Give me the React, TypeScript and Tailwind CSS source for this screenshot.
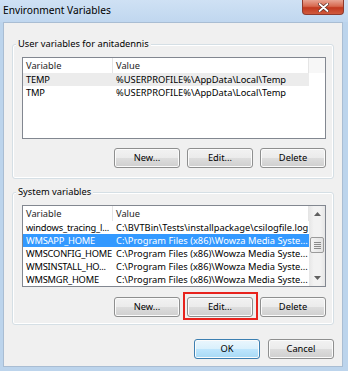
import { ReactNode } from "react"

const font = { fontFamily: '"Noto Sans", "Open Sans", sans-serif' }

const userVars = [
  { name: "TEMP", value: "%USERPROFILE%\\AppData\\Local\\Temp", hover: true },
  { name: "TMP", value: "%USERPROFILE%\\AppData\\Local\\Temp" },
]

const systemVars = [
  { name: "windows_tracing_l...", value: "C:\\BVTBin\\Tests\\installpackage\\csilogfile.log" },
  { name: "WMSAPP_HOME", value: "C:\\Program Files (x86)\\Wowza Media Syste...", selected: true },
  { name: "WMSCONFIG_HOME", value: "C:\\Program Files (x86)\\Wowza Media Syste..." },
  { name: "WMSINSTALL_HO...", value: "C:\\Program Files (x86)\\Wowza Media Syste..." },
  { name: "WMSMGR_HOME", value: "C:\\Program Files (x86)\\Wowza Media Syste..." },
]

function Btn({ children, primary = false }: { children: ReactNode; primary?: boolean }) {
  return (
    <button
      className={
        "h-[20px] w-[66px] rounded-[3px] border text-[9.3px] leading-none text-black flex items-center justify-center shadow-[inset_0_0_0_1px_#fbfbfb] " +
        (primary
          ? "border-[#3c7fb1] bg-[linear-gradient(#eaf6fd,#d9f0fc_50%,#bee6fd_50%,#a7d9f5)]"
          : "border-[#8e8f8f] bg-[linear-gradient(#f2f2f2,#ebebeb_50%,#dddddd_50%,#cfcfcf)]")
      }
    >
      {children}
    </button>
  )
}

function Header() {
  return (
    <div className="flex h-[15px] text-[9.3px] leading-[15px] text-[#1e1e1e]">
      <div className="w-[90px] pl-[3px] border-r border-[#e5e5e5]">Variable</div>
      <div className="w-[196px] pl-[3px] border-r border-[#e5e5e5]">Value</div>
      <div className="flex-1 bg-[#f7f7f7]" />
    </div>
  )
}

function Row({ name, value, selected, hover }: { name: string; value: string; selected?: boolean; hover?: boolean }) {
  return (
    <div
      className={
        "flex h-[13px] w-[286px] text-[9.3px] leading-[13px] whitespace-nowrap " +
        (selected ? "bg-[#3399ff] text-white" : hover ? "bg-[#ececec] text-black" : "text-black")
      }
    >
      <div className="w-[90px] pl-[3px] overflow-hidden tracking-[-0.2px]">{name}</div>
      <div className="w-[196px] pl-[3px] overflow-hidden">{value}</div>
    </div>
  )
}

function ScrollBar() {
  return (
    <div className="w-[16px] h-full bg-[linear-gradient(90deg,#e6e6e6,#f2f2f2_30%,#f2f2f2_70%,#e6e6e6)] flex flex-col items-center">
      <div className="h-[16px] flex items-center justify-center">
        <svg width="7" height="4" viewBox="0 0 7 4"><path d="M0 4 L3.5 0 L7 4 Z" fill="#606060" /></svg>
      </div>
      <div className="flex-1 w-full flex flex-col justify-end pb-[1px]">
        <div className="mx-[1px] h-[16px] rounded-[2px] border border-[#9b9b9b] bg-[linear-gradient(90deg,#f3f3f3,#e2e2e2)] flex flex-col items-center justify-center gap-[1px]">
          <div className="w-[7px] h-[1px] bg-[#8a8a8a]" />
          <div className="w-[7px] h-[1px] bg-[#8a8a8a]" />
          <div className="w-[7px] h-[1px] bg-[#8a8a8a]" />
          <div className="w-[7px] h-[1px] bg-[#8a8a8a]" />
        </div>
        <div className="h-[16px]" />
      </div>
      <div className="h-[16px] flex items-center justify-center">
        <svg width="7" height="4" viewBox="0 0 7 4"><path d="M0 0 L3.5 4 L7 0 Z" fill="#606060" /></svg>
      </div>
    </div>
  )
}

function Group({ label, children, className }: { label: string; children: ReactNode; className?: string }) {
  return (
    <div className={"relative w-[322px] rounded-[3px] border border-[#d5dfe5] shadow-[inset_0_0_0_1px_#ffffff] " + (className ?? "")}>
      <div className="absolute -top-[8px] left-[3px] px-[2px] bg-[#f0f0f0] text-[9.3px] leading-[14px] text-black">{label}</div>
      {children}
    </div>
  )
}

export default function App() {
  return (
    <div style={font} className="w-[348px] h-[371px] flex flex-col bg-[#bcd4ec] overflow-hidden">
      {/* title bar */}
      <div className="h-[22px] flex justify-between bg-[linear-gradient(#cfe1f4,#c0d7ef)]">
        <div className="pl-[3px] pt-[3px] text-[10.2px] leading-[14px] text-black">Environment Variables</div>
        <div className="mr-[4px] w-[42px] h-[15px] rounded-b-[4px] border border-t-0 border-[#8f3a2d] bg-[linear-gradient(#e8a493,#d7694f_45%,#c2391f_55%,#d05a3d)] flex items-center justify-center">
          <svg width="11" height="9" viewBox="0 0 11 9">
            <path d="M1.5 1 L9.5 8 M9.5 1 L1.5 8" stroke="#5a2a22" strokeWidth="3.2" strokeLinecap="round" />
            <path d="M1.5 1 L9.5 8 M9.5 1 L1.5 8" stroke="#ffffff" strokeWidth="1.8" strokeLinecap="round" />
          </svg>
        </div>
      </div>

      {/* client area */}
      <div className="ml-[3px] w-[340px] h-[345px] bg-[#f0f0f0] border border-[#a9bdd3] pl-[8px] pt-[21px]">
        <Group label="User variables for anitadennis" className="h-[135px] pt-[12px] pl-[9px]">
          <div className="w-[304px] h-[82px] border border-[#828790] bg-white">
            <Header />
            {userVars.map((v) => (
              <Row key={v.name} {...v} />
            ))}
          </div>
          <div className="mt-[9px] w-[304px] flex justify-end gap-[7px]">
            <Btn>New...</Btn>
            <Btn>Edit...</Btn>
            <Btn>Delete</Btn>
          </div>
        </Group>

        <Group label="System variables" className="mt-[13px] h-[133px] pt-[12px] pl-[9px]">
          <div className="w-[304px] h-[82px] border border-[#828790] bg-white flex">
            <div className="flex-1">
              <Header />
              {systemVars.map((v) => (
                <Row key={v.name} {...v} />
              ))}
            </div>
            <ScrollBar />
          </div>
          <div className="mt-[10px] w-[304px] flex justify-end gap-[7px]">
            <Btn>New...</Btn>
            <div className="relative">
              <Btn>Edit...</Btn>
              <div className="absolute -top-[5px] -bottom-[3px] -left-[4px] -right-[5px] border-2 border-[#e8231d]" />
            </div>
            <Btn>Delete</Btn>
          </div>
        </Group>

        <div className="mt-[14px] w-[322px] flex justify-end gap-[8px]">
          <Btn primary>OK</Btn>
          <Btn>Cancel</Btn>
        </div>
      </div>
    </div>
  )
}
